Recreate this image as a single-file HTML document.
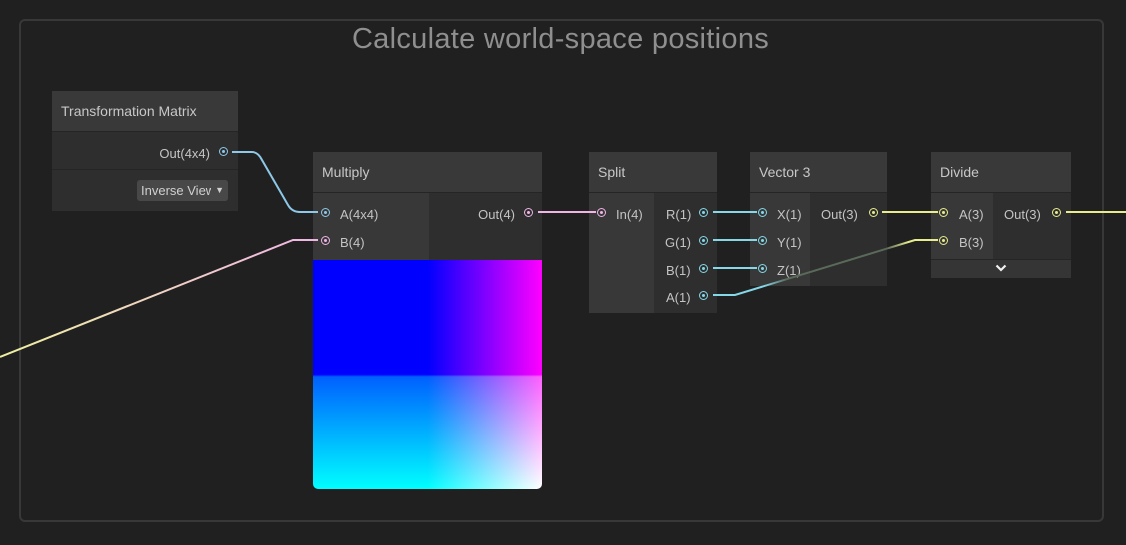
<!DOCTYPE html>
<html><head><style>
*{margin:0;padding:0;box-sizing:border-box}
body{width:1126px;height:545px;background:#202020;position:relative;overflow:hidden;font-family:"Liberation Sans",sans-serif;color:#c4c4c4}
.a{position:absolute}
.grp{left:19px;top:19px;width:1085px;height:503px;border:2px solid #383838;border-radius:6px}
.title{left:0;top:23px;width:1121px;text-align:center;font-size:29px;color:#8f8f8f;letter-spacing:0.3px}
.hdr{background:#393939;font-size:14px;color:#c8c8c8;padding-left:9px;line-height:40px;border-bottom:1px solid #252525}
.in{background:#383838}
.t{font-size:13px;color:#c4c4c4;position:absolute}
.p{position:absolute;width:9px;height:9px;border-radius:50%;border:1.5px solid;}
.p::after{content:"";position:absolute;left:1.5px;top:1.5px;width:3px;height:3px;border-radius:50%;background:currentColor}
.bl{color:#8ec8e8;border-color:#8ec8e8}
.pk{color:#f0b4e6;border-color:#f0b4e6}
.cy{color:#84d8e8;border-color:#84d8e8}
.ye{color:#e8ec8c;border-color:#e8ec8c}
</style></head><body>
<div class="a grp"></div>
<div class="a title">Calculate world-space positions</div>

<!-- Transformation Matrix -->
<div class="a" style="left:52px;top:91px;width:186px;height:120px;background:#2e2e2e">
<div class="hdr">Transformation Matrix</div>
<div class="a" style="top:41px;left:0;width:186px;height:38px;border-bottom:1px solid #252525"></div>
<div class="t" style="right:28px;top:55px">Out(4x4)</div>
<div class="p bl" style="left:167px;top:56px"></div>
<div class="a" style="left:85px;top:89px;width:91px;height:21px;background:#484848;border-radius:3px;font-size:13px;line-height:21px;padding-left:4px;color:#d0d0d0;overflow:hidden;white-space:nowrap">Inverse View<span style="position:absolute;right:0;top:0;background:#484848;padding:0 4px;font-size:9px">▼</span></div>
</div>

<!-- Multiply -->
<div class="a" style="left:313px;top:152px;width:229px;height:337px;background:#2e2e2e;border-radius:0 0 5px 5px;overflow:hidden">
<div class="hdr">Multiply</div>
<div class="a in" style="left:0;top:41px;width:116px;height:67px"></div>
<div class="p bl" style="left:8px;top:56px"></div><div class="t" style="left:27px;top:55px">A(4x4)</div>
<div class="p pk" style="left:8px;top:84px"></div><div class="t" style="left:27px;top:83px">B(4)</div>
<div class="t" style="right:27px;top:55px">Out(4)</div>
<div class="p pk" style="left:211px;top:56px"></div>
<div class="a" style="left:0;top:108px;width:229px;height:229px;background:linear-gradient(90deg,#0000ff 50%,#ff00ff 100%)">
<div class="a" style="left:0;top:0;width:100%;height:100%;mix-blend-mode:screen;background:linear-gradient(180deg,#000 50%,#006000 51%,#00ff00 100%)"></div>
</div>
</div>

<!-- Split -->
<div class="a" style="left:589px;top:152px;width:128px;height:161px;background:#2e2e2e">
<div class="hdr">Split</div>
<div class="a in" style="left:0;top:41px;width:65px;height:120px"></div>
<div class="p pk" style="left:8px;top:56px"></div><div class="t" style="left:27px;top:55px">In(4)</div>
<div class="t" style="left:77px;top:55px">R(1)</div><div class="p cy" style="left:110px;top:56px"></div>
<div class="t" style="left:76px;top:83px">G(1)</div><div class="p cy" style="left:110px;top:84px"></div>
<div class="t" style="left:77px;top:111px">B(1)</div><div class="p cy" style="left:110px;top:112px"></div>
<div class="t" style="left:77px;top:138px">A(1)</div><div class="p cy" style="left:110px;top:139px"></div>
</div>

<!-- Vector 3 -->
<div class="a" style="left:750px;top:152px;width:137px;height:134px;background:#2e2e2e">
<div class="hdr">Vector 3</div>
<div class="a in" style="left:0;top:41px;width:60px;height:93px"></div>
<div class="p cy" style="left:8px;top:56px"></div><div class="t" style="left:27px;top:55px">X(1)</div>
<div class="p cy" style="left:8px;top:84px"></div><div class="t" style="left:27px;top:83px">Y(1)</div>
<div class="p cy" style="left:8px;top:112px"></div><div class="t" style="left:27px;top:111px">Z(1)</div>
<div class="t" style="left:71px;top:55px">Out(3)</div><div class="p ye" style="left:119px;top:56px"></div>
</div>

<!-- Divide -->
<div class="a" style="left:931px;top:152px;width:140px;height:126px;background:#2e2e2e">
<div class="hdr">Divide</div>
<div class="a in" style="left:0;top:41px;width:62px;height:66px"></div>
<div class="p ye" style="left:8px;top:56px"></div><div class="t" style="left:28px;top:55px">A(3)</div>
<div class="p ye" style="left:8px;top:84px"></div><div class="t" style="left:28px;top:83px">B(3)</div>
<div class="t" style="left:73px;top:55px">Out(3)</div><div class="p ye" style="left:121px;top:56px"></div>
<div class="a" style="left:0;top:107px;width:140px;height:19px;background:#353535;border-top:1px solid #252525"></div>
<svg class="a" style="left:64px;top:112px" width="12" height="8"><path d="M1.5 1.5 L6 6 L10.5 1.5" stroke="#f0f0f0" stroke-width="2.2" fill="none"/></svg>
</div>

<svg class="a" style="left:0;top:0" width="1126" height="545">
<defs><linearGradient id="g1" x1="0" y1="0" x2="1" y2="0"><stop offset="0" stop-color="#eef0a0"/><stop offset="1" stop-color="#f0b4e6"/></linearGradient>
<linearGradient id="g2" gradientUnits="userSpaceOnUse" x1="720" y1="0" x2="942" y2="0"><stop offset="0" stop-color="#84d8e8"/><stop offset="0.2" stop-color="#84d8e8"/><stop offset="0.3" stop-color="#5a6a5a"/><stop offset="0.75" stop-color="#5a6a5a"/><stop offset="0.85" stop-color="#e8ec8c"/><stop offset="1" stop-color="#e8ec8c"/></linearGradient></defs>
<g fill="none" stroke-width="2">
<path d="M232 152 H252 Q258 152 262 160 L288 205 Q292 212 300 212 H318" stroke="#8ec8e8"/>
<path d="M0 357 L293 240 H318" stroke="url(#g1)"/>
<path d="M538 212 H596" stroke="#f0b4e6"/>
<path d="M713 212 H757 M713 240 H757 M713 268 H757" stroke="#84d8e8"/>
<path d="M713 295 H735 L915 240 H938" stroke="url(#g2)"/>
<path d="M882 212 H938 M1066 212 H1126" stroke="#e8ec8c"/>
</g></svg>
</body></html>
